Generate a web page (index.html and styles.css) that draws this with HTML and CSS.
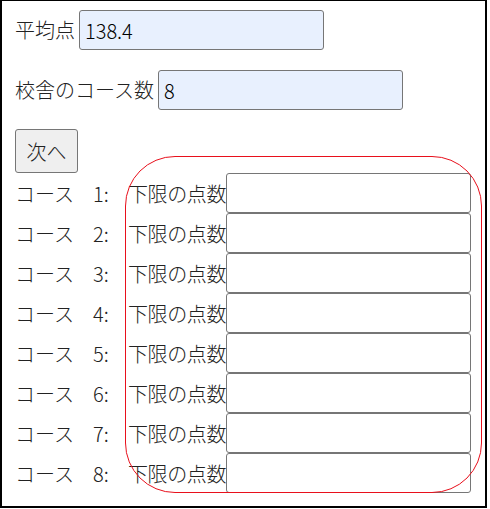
FILE: index.html
```html
<!DOCTYPE html>
<html lang="ja">
<head>
<meta charset="utf-8">
<title>コース設定</title>
<link rel="stylesheet" href="styles.css">
</head>
<body>
<div class="frame">
  <div class="field"><label class="flabel">平均点</label><input class="autofill" type="text" value="138.4"></div>
  <div class="field field-last"><label class="flabel">校舎のコース数</label><input class="autofill" type="text" value="8"></div>
  <button class="next" type="button">次へ</button>
  <div class="courses">
    <div class="course"><span class="cname">コース</span><span class="cnum">1:</span><span class="llabel">下限の点数</span><input class="score" type="text"></div>
    <div class="course"><span class="cname">コース</span><span class="cnum">2:</span><span class="llabel">下限の点数</span><input class="score" type="text"></div>
    <div class="course"><span class="cname">コース</span><span class="cnum">3:</span><span class="llabel">下限の点数</span><input class="score" type="text"></div>
    <div class="course"><span class="cname">コース</span><span class="cnum">4:</span><span class="llabel">下限の点数</span><input class="score" type="text"></div>
    <div class="course"><span class="cname">コース</span><span class="cnum">5:</span><span class="llabel">下限の点数</span><input class="score" type="text"></div>
    <div class="course"><span class="cname">コース</span><span class="cnum">6:</span><span class="llabel">下限の点数</span><input class="score" type="text"></div>
    <div class="course"><span class="cname">コース</span><span class="cnum">7:</span><span class="llabel">下限の点数</span><input class="score" type="text"></div>
    <div class="course"><span class="cname">コース</span><span class="cnum">8:</span><span class="llabel">下限の点数</span><input class="score" type="text"></div>
  </div>
  <div class="annot"></div>
</div>
</body>
</html>
```
FILE: styles.css
```css
html, body {
  margin: 0;
  padding: 0;
  background: #fff;
}
body {
  font-family: "Noto Sans CJK JP", "Noto Sans", sans-serif;
  font-size: 20px;
  font-weight: 300;
  color: #222;
}
.frame {
  position: relative;
  box-sizing: border-box;
  width: 487px;
  height: 508px;
  border: 2px solid #000;
  border-top-width: 1px;
  padding: 9px 0 0 13px;
}
.field {
  display: flex;
  align-items: center;
  gap: 4px;
  height: 40px;
  margin-bottom: 20px;
}
.field-last {
  margin-bottom: 19px;
}
.flabel {
  white-space: nowrap;
  line-height: 40px;
}
input {
  box-sizing: border-box;
  width: 245px;
  height: 40px;
  margin: 0;
  border: 1px solid #767676;
  border-radius: 3px;
  padding: 0 5px;
  font-family: "Noto Sans CJK JP", "Noto Sans", sans-serif;
  font-size: 20px;
  font-weight: 300;
  color: #000;
  background: #fff;
}
.autofill {
  background: #e8f0fe;
}
.next {
  display: block;
  box-sizing: border-box;
  width: 63px;
  height: 44px;
  margin: 0;
  padding: 0;
  border: 1px solid #767676;
  border-radius: 3px;
  background: #efefef;
  font-family: "Noto Sans CJK JP", "Noto Sans", sans-serif;
  font-size: 20px;
  font-weight: 300;
  color: #222;
}
.courses {
  display: flex;
  flex-direction: column;
}
.course {
  display: flex;
  align-items: center;
  height: 40px;
}
.cname {
  width: 78px;
  white-space: nowrap;
}
.cnum {
  width: 35px;
  white-space: nowrap;
}
.llabel {
  width: 98px;
  white-space: nowrap;
  letter-spacing: -0.4px;
}
.annot {
  position: absolute;
  left: 123px;
  top: 155px;
  box-sizing: border-box;
  width: 357px;
  height: 337px;
  border: 1px solid #e8101c;
  border-radius: 50px;
  pointer-events: none;
}
```
